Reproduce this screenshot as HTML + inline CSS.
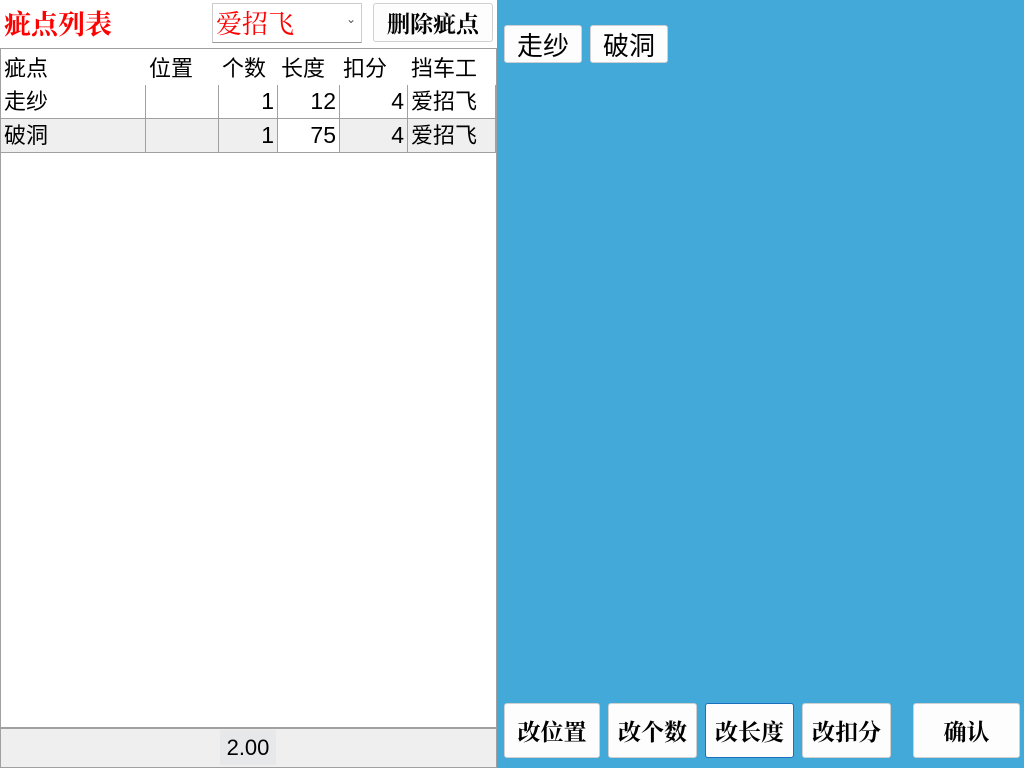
<!DOCTYPE html>
<html><head><meta charset="utf-8"><style>
*{margin:0;padding:0;box-sizing:border-box}
body{width:1024px;height:768px;position:relative;overflow:hidden;background:#fff;font-family:"Liberation Sans","Noto Sans CJK SC",sans-serif}
.a{position:absolute}
.btn{position:absolute;background:#fdfdfd;border:1px solid #d0d0d0;border-radius:3px;display:flex;align-items:center;justify-content:center;color:#000}
.c{position:absolute;font-size:22px;line-height:33px;padding:0 3px;overflow:hidden;white-space:nowrap}
.r{text-align:right;font-size:23px}
.s{font-family:'Noto Serif CJK SC',serif;font-weight:bold;font-size:23px}
</style></head><body>
<div class="a" style="left:4px;top:5px;font-size:27px;font-weight:bold;color:#f00;font-family:'Noto Serif CJK SC',serif;line-height:36px">疵点列表</div>
<div class="a" style="left:212px;top:3px;width:150px;height:40px;border:1px solid #ccc;border-bottom-color:#999;background:#fff"></div>
<div class="a" style="left:216px;top:5px;font-size:26px;color:#f00;font-family:'Noto Serif CJK SC',serif;line-height:36px">爱招飞</div>
<div class="a" style="left:346px;top:12px;font-size:12px;color:#555">&#8964;</div>
<div class="btn s" style="left:373px;top:3px;width:120px;height:39px;font-size:23px">删除疵点</div>
<div class="a" style="left:0;top:48px;width:497px;height:720px;border:1px solid #a0a0a0;background:#fff"></div>
<div class="a" style="left:1px;top:118px;width:494px;height:35px;background:#efefef;border-top:1px solid #a0a0a0;border-bottom:1px solid #a0a0a0"></div>
<div class="a" style="left:145px;top:85px;width:1px;height:68px;background:#a0a0a0"></div>
<div class="a" style="left:218px;top:85px;width:1px;height:68px;background:#a0a0a0"></div>
<div class="a" style="left:277px;top:85px;width:1px;height:68px;background:#a0a0a0"></div>
<div class="a" style="left:339px;top:85px;width:1px;height:68px;background:#a0a0a0"></div>
<div class="a" style="left:407px;top:85px;width:1px;height:68px;background:#a0a0a0"></div>
<div class="a" style="left:495px;top:85px;width:1px;height:68px;background:#a0a0a0"></div>
<div class="a" style="left:278px;top:119px;width:61px;height:33px;background:#fff"></div>
<div class="c" style="left:1px;top:52px">疵点</div><div class="c" style="left:146px;top:52px">位置</div><div class="c" style="left:219px;top:52px">个数</div><div class="c" style="left:278px;top:52px">长度</div><div class="c" style="left:340px;top:52px">扣分</div><div class="c" style="left:408px;top:52px">挡车工</div>
<div class="c" style="left:1px;top:85px">走纱</div><div class="c r" style="left:219px;top:85px;width:58px">1</div><div class="c r" style="left:278px;top:85px;width:61px">12</div><div class="c r" style="left:340px;top:85px;width:67px">4</div><div class="c" style="left:408px;top:85px">爱招飞</div>
<div class="c" style="left:1px;top:119px">破洞</div><div class="c r" style="left:219px;top:119px;width:58px">1</div><div class="c r" style="left:278px;top:119px;width:61px">75</div><div class="c r" style="left:340px;top:119px;width:67px">4</div><div class="c" style="left:408px;top:119px">爱招飞</div>
<div class="a" style="left:1px;top:727px;width:495px;height:40px;background:#efefef;border-top:2px solid #a0a0a0"></div>
<div class="a" style="left:220px;top:730px;width:56px;height:35px;background:#e6e8ea;font-size:22px;line-height:35px;text-align:center">2.00</div>
<div class="a" style="left:497px;top:0;width:527px;height:768px;background:#42a9d9"></div>
<div class="btn" style="left:504px;top:25px;width:78px;height:38px;font-size:26px">走纱</div>
<div class="btn" style="left:590px;top:25px;width:78px;height:38px;font-size:26px">破洞</div>
<div class="btn s" style="left:504px;top:703px;width:96px;height:55px">改位置</div>
<div class="btn s" style="left:608px;top:703px;width:89px;height:55px">改个数</div>
<div class="btn s" style="left:705px;top:703px;width:89px;height:55px;border-color:#1a6fc0">改长度</div>
<div class="btn s" style="left:802px;top:703px;width:89px;height:55px">改扣分</div>
<div class="btn s" style="left:913px;top:703px;width:107px;height:55px">确认</div>
</body></html>
